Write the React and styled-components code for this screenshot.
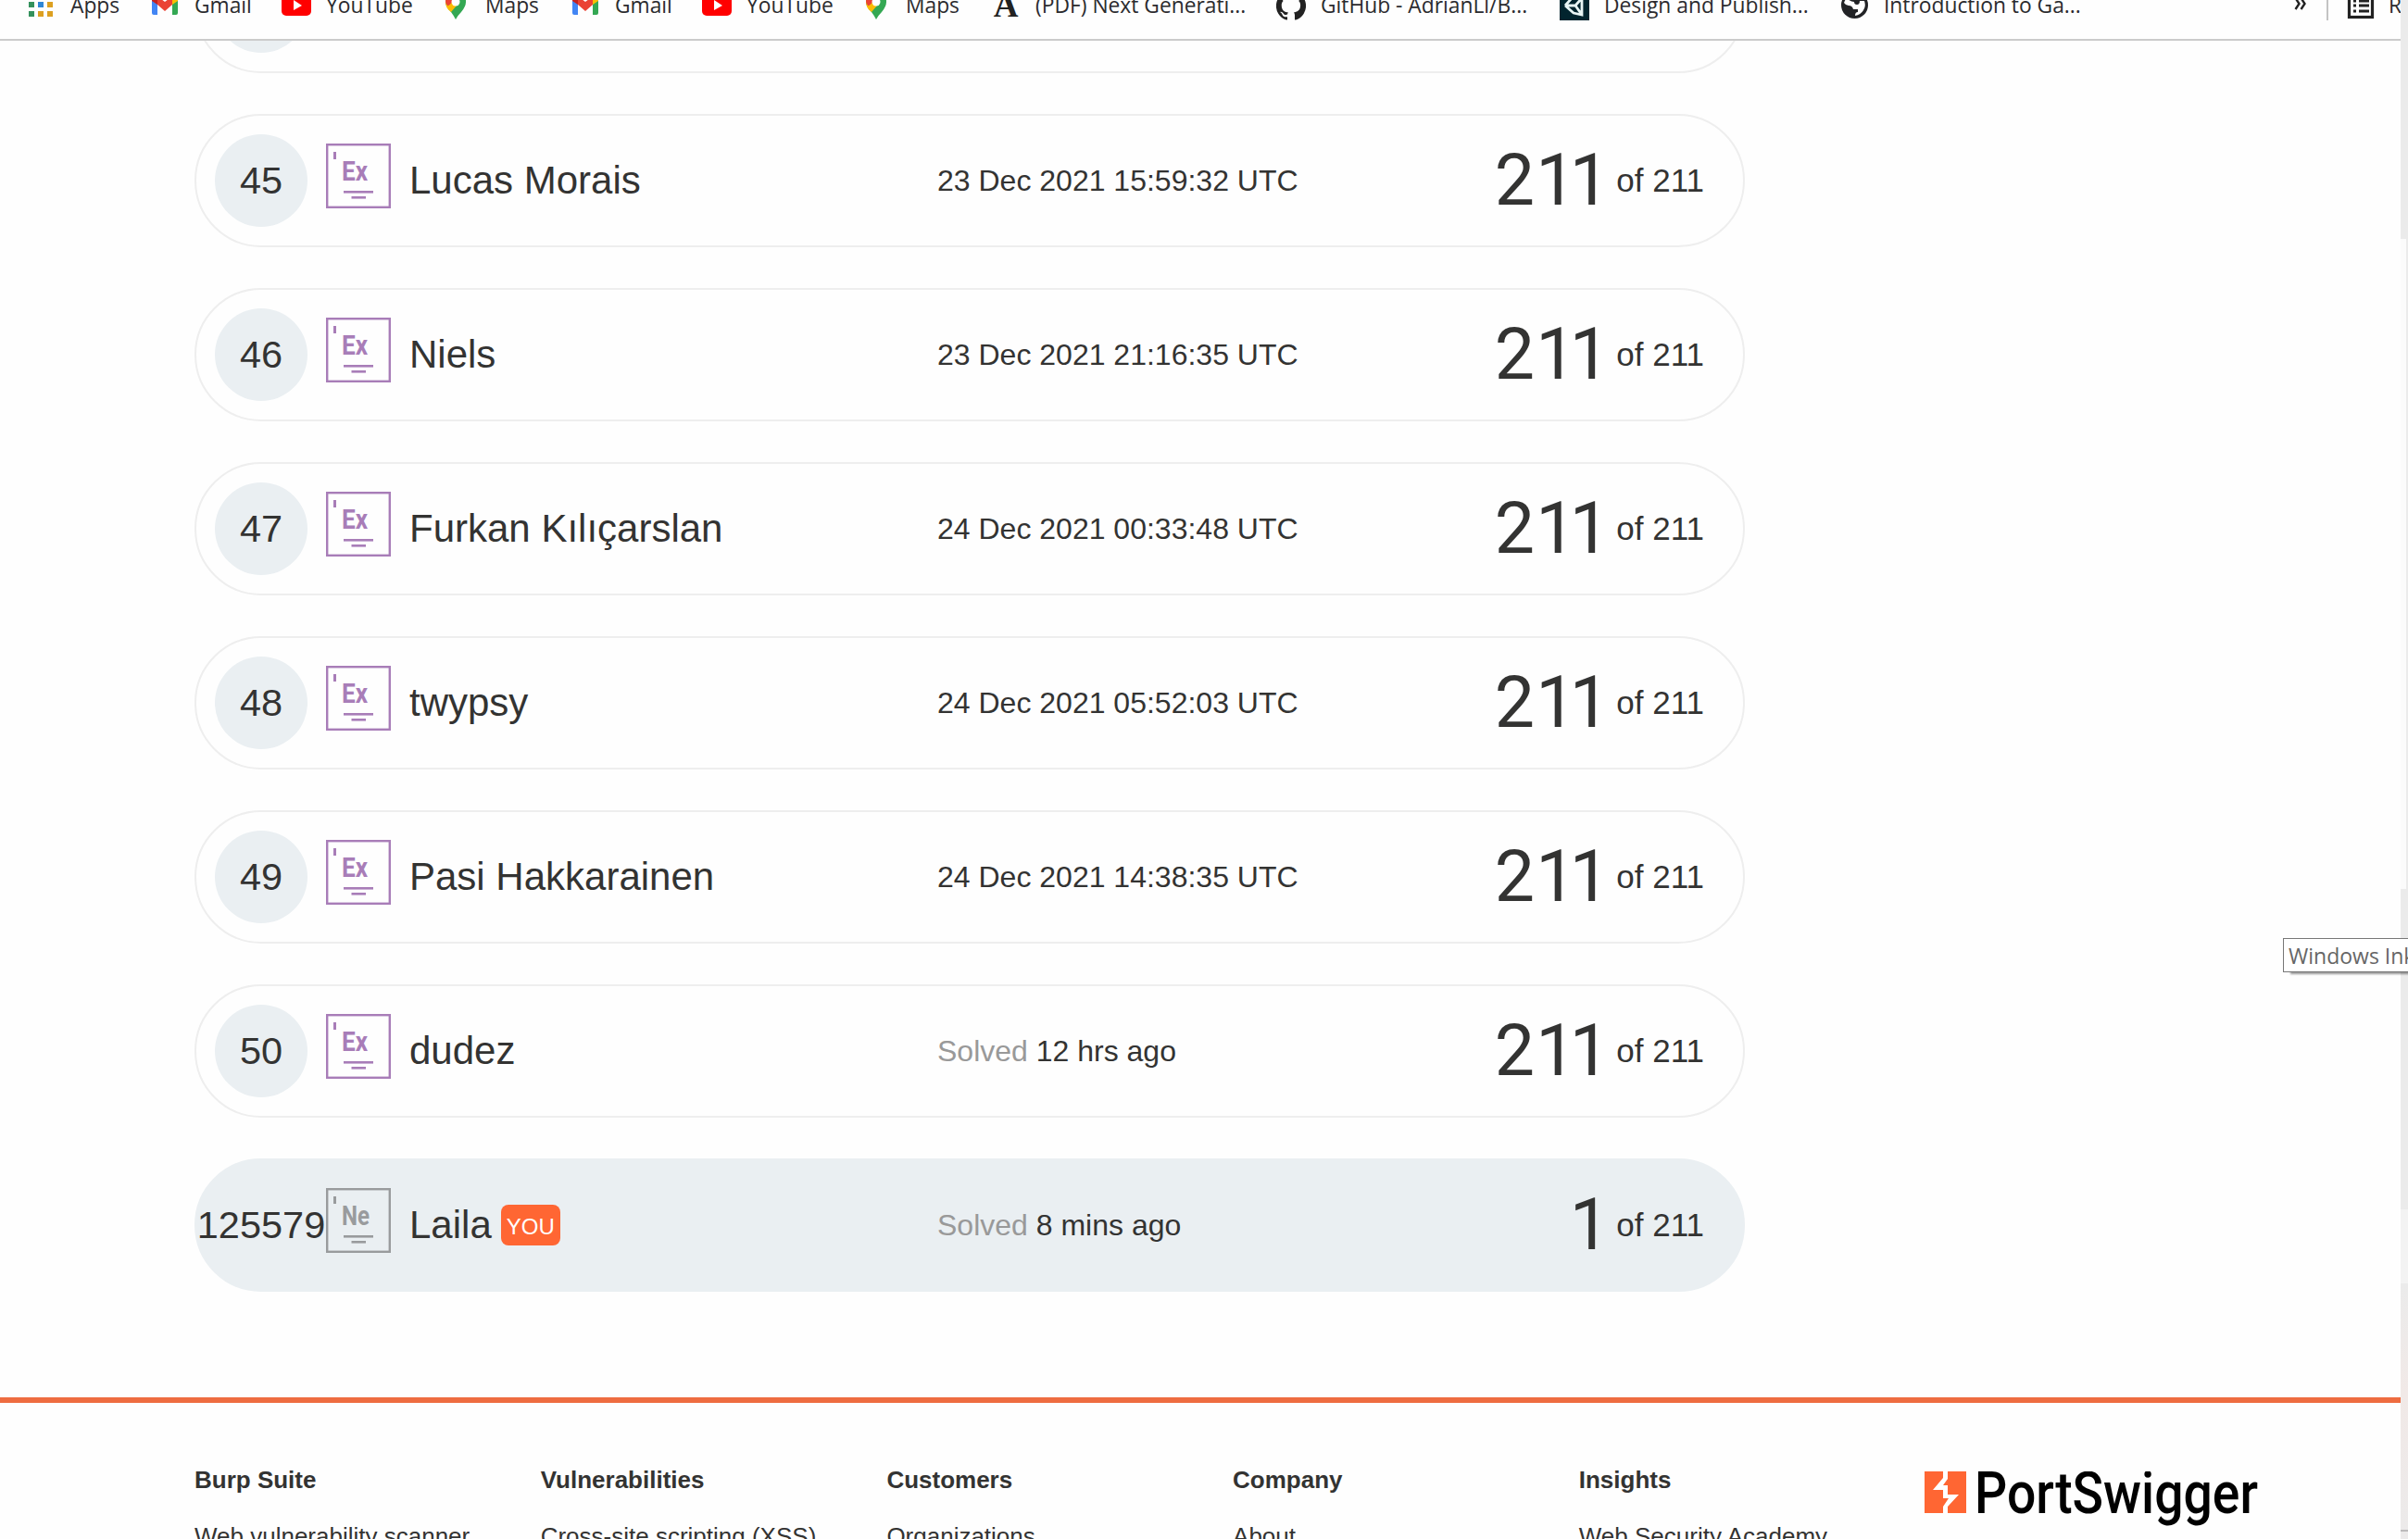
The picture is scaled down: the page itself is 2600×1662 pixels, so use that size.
import React from "react";
import styled, { createGlobalStyle } from "styled-components";

const Global = createGlobalStyle`
  * { box-sizing: border-box; }
  body { margin: 0; background: #fefefe; overflow: hidden; font-family: "Liberation Sans", Arial, sans-serif; color: #333332; }
`;

const Page = styled.div`
  display: grid;
  grid-template-columns: 2592px 8px;
  width: 2600px;
  height: 1662px;
  overflow: hidden;
  position: relative;
`;

const Main = styled.div`
  display: flex;
  flex-direction: column;
  height: 1662px;
  overflow: hidden;
`;

const BookmarkBar = styled.div`
  display: flex;
  flex: none;
  align-items: flex-start;
  height: 44px;
  padding-left: 28px;
  border-bottom: 2px solid #cbcbcb;
  overflow: hidden;
  font-family: "Open Sans", "Noto Sans", sans-serif;
  font-size: 22.8px;
  color: #2b2b2e;
`;

const Bookmark = styled.div`
  display: flex;
  flex: none;
  align-items: center;
  gap: ${(p) => p.$gap ?? 16}px;
  width: ${(p) => p.$w}px;
  height: 32px;
  margin-top: -10px;
  white-space: nowrap;
`;

const BookmarkLabel = styled.span`
  line-height: 32px;
`;

const BookmarkIcon = styled.svg`
  display: block;
  flex: none;
  width: 32px;
  height: 32px;
`;

const Overflow = styled.div`
  display: flex;
  flex: none;
  align-items: center;
  width: 35px;
  height: 32px;
  margin-top: -10px;
  padding-bottom: 4px;
`;

const Divider = styled.div`
  flex: none;
  width: 2px;
  height: 22px;
  margin-right: 19px;
  background: #c4c4c4;
`;

const Board = styled.div`
  flex: none;
  height: 1465px;
  overflow: hidden;
  padding-left: 210px;
`;

const List = styled.div`
  display: flex;
  flex-direction: column;
  gap: 44px;
  width: 1674px;
  margin-top: -109px;
`;

const Row = styled.div`
  display: grid;
  grid-template-columns: 120px 90px 570px 1fr;
  align-items: center;
  height: 144px;
  padding: 0 42px 0 20px;
  border: 2px solid ${(p) => (p.$own ? "#eaeff2" : "#eeeeee")};
  border-radius: 72px;
  background: ${(p) => (p.$own ? "#eaeff2" : "#fefefe")};
`;

const Rank = styled.div`
  display: flex;
  align-items: center;
  justify-content: center;
  width: 100px;
  height: 100px;
  border-radius: 50%;
  background: #eaeff2;
  font-size: 41.5px;
`;

const Level = styled.svg`
  display: block;
  width: 70px;
  height: 70px;
  margin-bottom: 10px;
`;

const Person = styled.div`
  display: flex;
  align-items: center;
  font-size: 42px;
  line-height: 48px;
`;

const You = styled.span`
  width: 64px;
  height: 44px;
  margin-left: 10px;
  padding-top: 3px;
  border-radius: 8px;
  background: #ff6633;
  color: #fff;
  font-size: 24px;
  line-height: 42px;
  text-align: center;
`;

const Details = styled.div`
  display: flex;
  align-items: center;
  justify-content: space-between;
`;

const When = styled.div`
  font-size: 32px;
  white-space: pre;
`;

const Muted = styled.span`
  color: #999;
`;

const Score = styled.div`
  display: flex;
  align-items: center;
  gap: 14px;
  font-size: 35px;
`;

const Big = styled.span`
  font-family: Roboto, "Liberation Sans", sans-serif;
  font-size: 77px;
  line-height: 88px;
  letter-spacing: 1px;
`;

const Ones = styled.span`
  letter-spacing: -6.7px;
`;

const Footer = styled.footer`
  flex: 1;
  display: grid;
  grid-template-columns: repeat(5, 373.7px) 1fr;
  padding: 66px 0 0 210px;
  border-top: 6px solid #ee6c40;
  overflow: hidden;
`;

const FooterColumn = styled.div`
  display: flex;
  flex-direction: column;
  gap: 31px;
  font-size: 26px;
  line-height: 30px;
  white-space: nowrap;
`;

const Heading = styled.strong`
  padding-top: 2px;
  font-weight: 700;
`;

const Logo = styled.svg`
  display: block;
  width: 370px;
  height: 70px;
  margin-top: 8px;
`;

const SideStrip = styled.div`
  display: flex;
  flex-direction: column;
`;

const StripPart = styled.div`
  height: ${(p) => p.$h}px;
  background: ${(p) => p.$bg};
  border-right: ${(p) => (p.$edge ? "2px solid #ebebeb" : "0")};
`;

const Tooltip = styled.div`
  position: absolute;
  left: 2465px;
  top: 1013px;
  width: 160px;
  height: 37px;
  padding-left: 5px;
  border: 1px solid #777;
  background: #fff;
  box-shadow: 7px 3px 2px -1px rgba(0, 0, 0, 0.4);
  font-family: "Open Sans", "Noto Sans", sans-serif;
  font-size: 23px;
  line-height: 36px;
  color: #666;
  white-space: nowrap;
`;

const GRID = ["#34915c", "#2f86d6", "#dca021"];

function Icon({ kind }) {
  return (
    <BookmarkIcon viewBox="0 0 32 32">
      {kind === "apps" &&
        [2, 12, 22].map((y, r) =>
          [3, 13, 23].map((x, c) => (
            <rect key={x + "-" + y} x={x} y={y} width="6" height="6" fill={r === 2 ? ["#34915c", "#dca021", "#dca021"][c] : GRID[c]} />
          ))
        )}
      {kind === "gmail" && (
        <g>
          <path d="M2 9v15q0 2 2 2h4V12z" fill="#4285f4" />
          <path d="M30 9v15q0 2-2 2h-4V12z" fill="#34a853" />
          <path d="M2 8q0-5 4-4l2 2v9l-6-4z" fill="#c5221f" />
          <path d="M30 8q0-5-4-4l-2 2v9l6-4z" fill="#fbbc04" />
          <path d="M8 6l8 6 8-6v9l-8 7-8-7z" fill="#ea4335" />
        </g>
      )}
      {kind === "youtube" && (
        <g>
          <rect x="0" y="3" width="32" height="24" rx="5" fill="#f00" />
          <path d="M13 10l9 6-9 5z" fill="#fff" />
        </g>
      )}
      {kind === "maps" && (
        <g>
          <path d="M5 12a11 11 0 0 1 22 0q0 5-5 11-4 4-6 8-2-4-5-8-6-6-6-11z" fill="#34a853" />
          <path d="M5 12l3-7 8 7-7 9q-4-4-4-9z" fill="#fbbc04" />
          <path d="M5 12q0-5 4-8l6 5-7 8q-3-3-3-5z" fill="#ea4335" />
          <path d="M24 5q3 3 3 7l-6 9-6-7z" fill="#34a853" />
          <path d="M6 17l8-4 3 3-6 7q-4-3-5-6z" fill="#fbbc04" />
          <circle cx="16" cy="12" r="4.5" fill="#fff" />
        </g>
      )}
      {kind === "a" && (
        <text x="16" y="28" textAnchor="middle" fontFamily="Liberation Serif, serif" fontWeight="700" fontSize="37" fill="#222">A</text>
      )}
      {kind === "github" && (
        <path
          transform="scale(1.333)"
          fill="#222"
          d="M12 .3a12 12 0 0 0-3.8 23.4c.6.1.8-.3.8-.6v-2c-3.3.7-4-1.6-4-1.6-.6-1.4-1.4-1.8-1.4-1.8-1-.7.1-.7.1-.7 1.2 0 1.9 1.2 1.9 1.2 1 1.8 2.8 1.3 3.5 1 0-.8.4-1.3.7-1.6-2.7-.3-5.5-1.3-5.5-6 0-1.2.5-2.3 1.3-3.1-.2-.4-.6-1.6 0-3.2 0 0 1-.3 3.4 1.2a11.5 11.5 0 0 1 6 0c2.3-1.5 3.3-1.2 3.3-1.2.6 1.6.2 2.8 0 3.2.9.8 1.3 1.9 1.3 3.2 0 4.6-2.8 5.6-5.5 5.9.5.4.9 1 .9 2.2v3.3c0 .3.1.7.8.6A12 12 0 0 0 12 .3"
        />
      )}
      {kind === "unity" && (
        <g>
          <rect width="32" height="32" fill="#02242e" />
          <path d="M6 16L14 7M6 16l9 8 9 2V8L14 7M6 16h11M17 16l7 10M17 16l7-8" stroke="#e8f4f4" strokeWidth="2.8" fill="none" />
        </g>
      )}
      {kind === "globe" && (
        <g>
          <circle cx="16.500" cy="15.500" r="14.500" fill="#222326" />
          <path d="M5 13q1-3 3-5 4 4 8 4 0 3 3 3 3 0 3-4h5q2 6-1 10-3 5-9 6 0-4 3-4v-3h-5q-1-4-5-4-3 0-5-3z" fill="#fff" />
        </g>
      )}
      {kind === "list" && (
        <g>
          <rect x="3.500" y="2" width="25" height="26.500" fill="none" stroke="#222" strokeWidth="3.200" />
          <path d="M8 11h3M8 16h3M8 22h3M14 11h11M14 16h11M14 22h11" stroke="#222" strokeWidth="3" />
        </g>
      )}
    </BookmarkIcon>
  );
}

const bookmarks = [
  ["apps", "Apps", 134],
  ["gmail", "Gmail", 142],
  ["youtube", "YouTube", 172],
  ["maps", "Maps", 140],
  ["gmail", "Gmail", 142],
  ["youtube", "YouTube", 172],
  ["maps", "Maps", 140],
  ["a", "(PDF) Next Generati...", 308],
  ["github", "GitHub - AdrianLl/B...", 306],
  ["unity", "Design and Publish...", 302],
  ["globe", "Introduction to Ga...", 491],
];

const rows = [
  { rank: "44", level: "Ex", name: "", date: "", score: "" },
  { rank: "45", level: "Ex", name: "Lucas Morais", date: "23 Dec 2021 15:59:32 UTC", score: "211" },
  { rank: "46", level: "Ex", name: "Niels", date: "23 Dec 2021 21:16:35 UTC", score: "211" },
  { rank: "47", level: "Ex", name: "Furkan Kılıçarslan", date: "24 Dec 2021 00:33:48 UTC", score: "211" },
  { rank: "48", level: "Ex", name: "twypsy", date: "24 Dec 2021 05:52:03 UTC", score: "211" },
  { rank: "49", level: "Ex", name: "Pasi Hakkarainen", date: "24 Dec 2021 14:38:35 UTC", score: "211" },
  { rank: "50", level: "Ex", name: "dudez", ago: "12 hrs ago", score: "211" },
  { rank: "125579", level: "Ne", name: "Laila", ago: "8 mins ago", score: "1", own: true },
];

function LevelBadge({ label }) {
  const color = label === "Ex" ? "#a87db8" : "#999b9d";
  return (
    <Level viewBox="0 0 70 70">
      <rect x="1.200" y="1.200" width="67.600" height="67.600" fill="none" stroke={color} strokeWidth="2.400" />
      <rect x="8" y="9" width="3" height="8" fill={color} />
      <text x="17" y="40" fontFamily="Roboto, sans-serif" fontWeight="700" fontSize="29" textLength={label === "Ex" ? 28 : 30} lengthAdjust="spacingAndGlyphs" fill={color}>
        {label}
      </text>
      <rect x="19" y="51" width="32" height="2.600" fill={color} />
      <rect x="27.500" y="57" width="15.500" height="2.600" fill={color} />
    </Level>
  );
}

const columns = [
  ["Burp Suite", "Web vulnerability scanner"],
  ["Vulnerabilities", "Cross-site scripting (XSS)"],
  ["Customers", "Organizations"],
  ["Company", "About"],
  ["Insights", "Web Security Academy"],
];

export default function App() {
  return (
    <>
      <Global />
      <Page>
        <Main>
          <BookmarkBar>
            {bookmarks.map(([kind, label, w], i) => (
              <Bookmark key={i} $w={w}>
                <Icon kind={kind} />
                <BookmarkLabel>{label}</BookmarkLabel>
              </Bookmark>
            ))}
            <Overflow>
              <svg width="14" height="14" viewBox="0 0 14 14">
                <path d="M1.500 1l4 6-4 6M7.500 1l4 6-4 6" fill="none" stroke="#222" strokeWidth="2.400" />
              </svg>
            </Overflow>
            <Divider />
            <Bookmark $w={70} $gap={14}>
              <Icon kind="list" />
              <BookmarkLabel>Reading list</BookmarkLabel>
            </Bookmark>
          </BookmarkBar>
          <Board>
            <List>
              {rows.map((r) => (
                <Row key={r.rank} $own={r.own}>
                  <Rank>{r.rank}</Rank>
                  <LevelBadge label={r.level} />
                  <Person>
                    {r.name}
                    {r.own && <You>YOU</You>}
                  </Person>
                  <Details>
                    <When>
                      {r.ago ? (
                        <>
                          <Muted>Solved</Muted> {r.ago}
                        </>
                      ) : (
                        r.date
                      )}
                    </When>
                    {r.score && (
                      <Score>
                        <Big>
                          {r.score.replace(/1+$/, "")}
                          <Ones>{r.score.match(/1+$/)[0]}</Ones>
                        </Big>
                        <span>of 211</span>
                      </Score>
                    )}
                  </Details>
                </Row>
              ))}
            </List>
          </Board>
          <Footer>
            {columns.map(([title, link]) => (
              <FooterColumn key={title}>
                <Heading>{title}</Heading>
                <span>{link}</span>
              </FooterColumn>
            ))}
            <Logo viewBox="0 0 370 70">
              <rect width="45" height="45" fill="#ff6633" />
              <path d="M20 0h5v8l-5 7h5v10h12L25 38v7h-5v-7l6-9h-6v-9H9L20 7z" fill="#fff" />
              <text x="54" y="45" fontFamily="Roboto, sans-serif" fontWeight="500" fontSize="63" textLength="306" lengthAdjust="spacingAndGlyphs" fill="#000">
                PortSwigger
              </text>
            </Logo>
          </Footer>
        </Main>
        <SideStrip>
          <StripPart $h={258} $bg="#ebebeb" />
          <StripPart $h={702} $bg="#fbfbfb" $edge />
          <StripPart $h={346} $bg="#ebebeb" />
          <StripPart $h={80} $bg="#f3f3f3" />
          <StripPart $h={266} $bg="linear-gradient(#ebebeb, #f1e9e7 45%, #eceaea)" />
          <StripPart $h={2} $bg="#bcbabb" />
          <StripPart $h={8} $bg="#eceaea" />
        </SideStrip>
        <Tooltip>Windows Ink</Tooltip>
      </Page>
    </>
  );
}
